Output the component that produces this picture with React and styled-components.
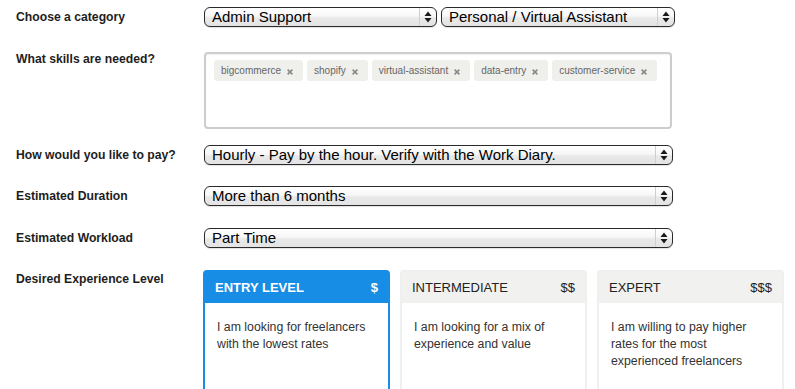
import React from "react";
import styled, { createGlobalStyle } from "styled-components";

const Global = createGlobalStyle`
  html, body { margin: 0; padding: 0; background: #fff; }
  body { font-family: "Liberation Sans", Arial, Helvetica, sans-serif; color: #222; }
`;

const Page = styled.div`
  padding: 7px 16px 0 16px;
  display: flex;
  flex-direction: column;
`;

const Row = styled.div`
  display: flex;
  align-items: ${(p) => (p.$top ? "flex-start" : "center")};
  margin-top: ${(p) => p.$space || 0}px;
`;

const Label = styled.div`
  width: 188px;
  flex: none;
  font-size: 12.2px;
  line-height: 14px;
  font-weight: bold;
  color: #1e1e1e;
  padding-top: ${(p) => p.$pt || 0}px;
`;

const Controls = styled.div`
  display: flex;
  gap: 4px;
`;

const SelectBox = styled.div`
  box-sizing: border-box;
  width: ${(p) => p.$w}px;
  height: 20px;
  border: 1px solid #2a2a2a;
  border-radius: 6px;
  background: linear-gradient(#ffffff 0%, #f7f7f7 45%, #e9e9e9 55%, #e3e3e3 100%);
  box-shadow: inset 0 1px 0 #fff, 0 1px 1px rgba(0, 0, 0, 0.12);
  display: flex;
  align-items: stretch;
  overflow: hidden;
`;

const SelectValue = styled.span`
  flex: 1;
  padding-left: 7px;
  font-size: 15px;
  line-height: 18px;
  color: #000;
  white-space: nowrap;
  overflow: hidden;
`;

const SelectArrows = styled.span`
  width: 16px;
  flex: none;
  border-left: 1px solid #cfcfcf;
  display: flex;
  align-items: center;
  justify-content: center;
`;

const Select = ({ value, w }) => (
  <SelectBox $w={w}>
    <SelectValue>{value}</SelectValue>
    <SelectArrows>
      <svg width="8" height="12" viewBox="0 0 8 12">
        <path d="M4 0.5 L7.5 5 L0.5 5 Z" fill="#1a1a1a" />
        <path d="M4 11.5 L7.5 7 L0.5 7 Z" fill="#1a1a1a" />
      </svg>
    </SelectArrows>
  </SelectBox>
);

const SkillsBox = styled.div`
  box-sizing: border-box;
  width: 468px;
  height: 77px;
  border: 2px solid #cdcdcd;
  border-radius: 4px;
  padding: 6px 8px;
  display: flex;
  flex-wrap: wrap;
  align-content: flex-start;
  gap: 4px;
  box-shadow: inset 0 1px 2px rgba(0, 0, 0, 0.06);
`;

const Tag = styled.span`
  height: 21px;
  display: inline-flex;
  align-items: center;
  gap: 6px;
  padding: 0 10px 0 7px;
  background: #efefec;
  border-radius: 3px;
  font-size: 10px;
  color: #666;
`;

const TagX = () => (
  <svg width="6" height="6" viewBox="0 0 6 6" style={{ marginTop: 2 }}>
    <path d="M0.6 0.6 L5.4 5.4 M5.4 0.6 L0.6 5.4" stroke="#8a8a8a" strokeWidth="1.6" />
  </svg>
);

const Cards = styled.div`
  display: grid;
  grid-template-columns: repeat(3, 187px);
  gap: 10px;
  margin-left: -1px;
`;

const Card = styled.div`
  box-sizing: border-box;
  height: 140px;
  border: 2px solid ${(p) => (p.$active ? "#188de6" : "#efefef")};
  border-radius: 4px 4px 0 0;
  background: #fff;
  display: flex;
  flex-direction: column;
`;

const CardHead = styled.div`
  height: 31px;
  flex: none;
  background: ${(p) => (p.$active ? "#188de6" : "#f1f1f0")};
  color: ${(p) => (p.$active ? "#fff" : "#222")};
  font-weight: ${(p) => (p.$active ? "bold" : "normal")};
  font-size: 13px;
  display: flex;
  align-items: center;
  justify-content: space-between;
  padding: 0 10px 0 10px;
`;

const CardBody = styled.div`
  padding: 16px 12px 0 12px;
  font-size: 12.3px;
  line-height: 17px;
  color: #333;
`;

const levels = [
  { t: "ENTRY LEVEL", p: "$", d: "I am looking for freelancers with the lowest rates", a: true },
  { t: "INTERMEDIATE", p: "$$", d: "I am looking for a mix of experience and value" },
  { t: "EXPERT", p: "$$$", d: "I am willing to pay higher rates for the most experienced freelancers" },
];

const skills = ["bigcommerce", "shopify", "virtual-assistant", "data-entry", "customer-service"];

export default function App() {
  return (
    <>
      <Global />
      <Page>
        <Row>
          <Label>Choose a category</Label>
          <Controls>
            <Select w={233} value="Admin Support" />
            <Select w={234} value="Personal / Virtual Assistant" />
          </Controls>
        </Row>
        <Row $top $space={25}>
          <Label>What skills are needed?</Label>
          <SkillsBox>
            {skills.map((s) => (
              <Tag key={s}>
                {s}
                <TagX />
              </Tag>
            ))}
          </SkillsBox>
        </Row>
        <Row $space={16}>
          <Label>How would you like to pay?</Label>
          <Select w={469} value="Hourly - Pay by the hour. Verify with the Work Diary." />
        </Row>
        <Row $space={21}>
          <Label>Estimated Duration</Label>
          <Select w={469} value="More than 6 months" />
        </Row>
        <Row $space={22}>
          <Label>Estimated Workload</Label>
          <Select w={469} value="Part Time" />
        </Row>
        <Row $top $space={22}>
          <Label $pt={2}>Desired Experience Level</Label>
          <Cards>
            {levels.map((l) => (
              <Card key={l.t} $active={l.a}>
                <CardHead $active={l.a}>
                  <span>{l.t}</span>
                  <span>{l.p}</span>
                </CardHead>
                <CardBody>{l.d}</CardBody>
              </Card>
            ))}
          </Cards>
        </Row>
      </Page>
    </>
  );
}
